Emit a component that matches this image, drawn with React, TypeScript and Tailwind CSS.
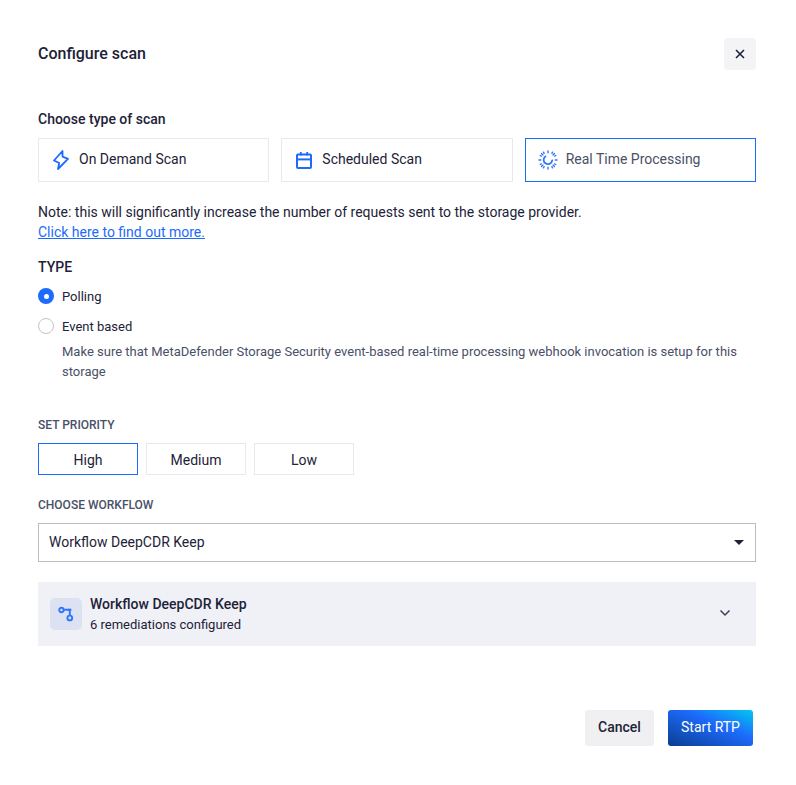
import React from "react";

const Bolt = () => (
  <svg width="16" height="20" viewBox="0 0 16 20" fill="none" stroke="#1d6bfc" strokeWidth="1.8" strokeLinejoin="round" strokeLinecap="round">
    <path d="M9.5 1 L1 10.5 L6.2 13 L5 19 L15 8.8 L9.5 6.6 Z" />
  </svg>
);

const Calendar = () => (
  <svg width="16" height="17" viewBox="0 0 16 17" fill="none" stroke="#1d6bfc" strokeWidth="2">
    <rect x="1" y="2.6" width="14" height="13.4" rx="1" />
    <path d="M1 7.4h14" />
    <path d="M4.8 0v3.6M11.2 0v3.6" strokeWidth="1.8" />
  </svg>
);

const Rtp = () => (
  <svg width="20" height="20" viewBox="0 0 20 20" fill="none" stroke="#2f76fb" strokeLinecap="round">
    <path
      d="M10 1v1.8M10 17.2V19M1 10h1.8M17.2 10H19M3.6 3.6l1.3 1.3M15.1 15.1l1.3 1.3M3.6 16.4l1.3-1.3M15.1 4.9l1.3-1.3M5.5 2.2l.6 1.1M13.9 16.7l.6 1.1M2.2 14.5l1.1-.6M16.7 6.1l1.1-.6M14.5 2.2l-.6 1.1M6.1 16.7l-.6 1.1M2.2 5.5l1.1.6M16.7 13.9l1.1.6"
      strokeWidth="1.4"
    />
    <path d="M7.4 6.4 A4.3 4.3 0 1 0 14.2 10.4" strokeWidth="1.8" />
  </svg>
);

const Flow = () => (
  <svg width="16" height="16" viewBox="0 0 16 16" fill="none" stroke="#2f76fb" strokeWidth="1.9">
    <circle cx="3.4" cy="4" r="2.2" />
    <circle cx="11.8" cy="12" r="2.4" />
    <path d="M5.6 3.8H11.8V9.6" />
    <path d="M9.8 3.8h3.6" />
  </svg>
);

export default function App() {
  const cardBase = "h-[44px] flex items-center border text-sm";
  return (
    <div className="w-[796px] h-[785px] bg-white px-[38px] pt-[38px] text-[#1d2238] font-['Roboto',sans-serif] flex flex-col items-stretch box-border">
      <div className="w-[718px] flex flex-col">
        <div className="flex items-center justify-between h-[32px]">
          <h1 className="text-base font-medium leading-[32px]">Configure scan</h1>
          <button className="w-[32px] h-[32px] bg-[#f4f4f6] rounded-[3px] flex items-center justify-center">
            <svg width="10" height="10" viewBox="0 0 10 10" stroke="#1d2238" strokeWidth="1.6" fill="none">
              <path d="M1 1l8 8M9 1l-8 8" />
            </svg>
          </button>
        </div>

        <div className="mt-[39px] text-sm font-medium leading-[20px]">Choose type of scan</div>

        <div className="mt-[9px] grid grid-cols-3 gap-3">
          <div className={`${cardBase} border-[#e9e9ec] pl-[14px]`}>
            <Bolt />
            <span className="ml-[10px] mb-[2px]">On Demand Scan</span>
          </div>
          <div className={`${cardBase} border-[#e9e9ec] pl-[14px]`}>
            <Calendar />
            <span className="ml-[10px] mb-[2px]">Scheduled Scan</span>
          </div>
          <div className={`${cardBase} border-[#1d6bfc] pl-[12px] text-[#4a5068]`}>
            <Rtp />
            <span className="ml-[8px] mb-[2px]">Real Time Processing</span>
          </div>
        </div>

        <p className="mt-[20px] text-sm leading-[20px]">
          Note: this will significantly increase the number of requests sent to the storage provider.
        </p>
        <a className="text-sm leading-[20px] text-[#1d6bfc] underline">Click here to find out more.</a>

        <div className="mt-[15px] text-sm font-medium leading-[20px]">TYPE</div>

        <div className="mt-[9px] flex items-center h-[20px] text-[13px]">
          <span className="w-[16px] h-[16px] rounded-full bg-[#1d6bfc] flex items-center justify-center">
            <span className="w-[5px] h-[5px] rounded-full bg-white" />
          </span>
          <span className="ml-[8px] mt-[2px]">Polling</span>
        </div>
        <div className="mt-[10px] flex items-center h-[20px] text-[13px]">
          <span className="w-[16px] h-[16px] rounded-full border border-[#c4c4c8] bg-white" />
          <span className="ml-[8px] mt-[2px]">Event based</span>
        </div>
        <p className="mt-[6px] ml-[24px] text-[13px] leading-[20px] text-[#4a5068]">
          Make sure that MetaDefender Storage Security event-based real-time processing webhook invocation is setup for this storage
        </p>

        <div className="mt-[35px] text-xs font-medium leading-[16px] text-[#4a5068]">SET PRIORITY</div>
        <div className="mt-[10px] flex gap-2">
          <div className="w-[100px] h-[32px] border border-[#1d6bfc] pt-[2px] flex items-center justify-center text-sm">High</div>
          <div className="w-[100px] h-[32px] border border-[#e9e9ec] pt-[2px] flex items-center justify-center text-sm">Medium</div>
          <div className="w-[100px] h-[32px] border border-[#e9e9ec] pt-[2px] flex items-center justify-center text-sm">Low</div>
        </div>

        <div className="mt-[22px] text-xs font-medium leading-[16px] text-[#4a5068]">CHOOSE WORKFLOW</div>
        <div className="mt-[10px] h-[39px] border border-[#bcbcbc] pl-[10px] pr-[11px] flex items-center justify-between text-sm">
          <span className="mb-[2px]">Workflow DeepCDR Keep</span>
          <span className="w-0 h-0 border-l-[5px] border-r-[5px] border-t-[5px] border-l-transparent border-r-transparent border-t-[#1d2238]" />
        </div>

        <div className="mt-[20px] h-[64px] bg-[#f0f1f6] pl-[12px] pr-[25px] flex items-center">
          <div className="w-[32px] h-[32px] rounded-[5px] bg-[#dce2f2] flex items-center justify-center">
            <Flow />
          </div>
          <div className="ml-[8px] flex-1">
            <div className="text-sm font-medium leading-[20px]">Workflow DeepCDR Keep</div>
            <div className="text-[13px] leading-[20px] pt-[1px]">6 remediations configured</div>
          </div>
          <svg className="mb-[2px]" width="12" height="8" viewBox="0 0 12 8" fill="none" stroke="#3a4058" strokeWidth="1.5">
            <path d="M1.5 1.5L6 6l4.5-4.5" />
          </svg>
        </div>

        <div className="mt-[64px] pr-[3px] flex justify-end gap-[14px]">
          <button className="w-[69px] h-[36px] rounded-[3px] bg-[#f0f0f2] pb-[2px] text-sm font-medium">Cancel</button>
          <button className="w-[85px] h-[36px] rounded-[3px] bg-[linear-gradient(to_top_right,#0a3d91,#1d6bfc_60%,#00c8f0)] pb-[2px] text-sm text-white">Start RTP</button>
        </div>
      </div>
    </div>
  );
}
